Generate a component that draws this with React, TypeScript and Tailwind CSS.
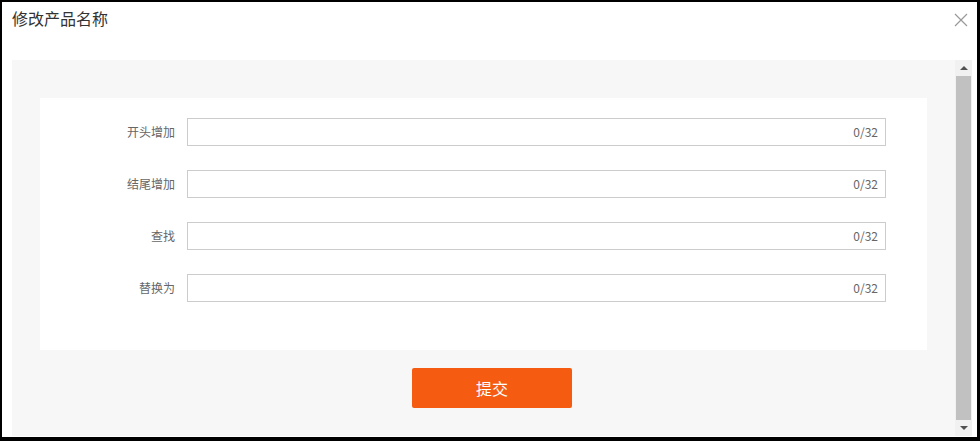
import React from "react";

const rows = ["开头增加", "结尾增加", "查找", "替换为"];

export default function App() {
  return (
    <div
      className="w-[980px] h-[441px] bg-black pt-[2px] pl-[2px] pr-[3px] pb-[4px]"
      style={{ fontFamily: '"Noto Sans CJK SC", "Noto Sans", sans-serif' }}
    >
      <div className="w-full h-full bg-white flex flex-col pl-[10px] pr-[5px]">
        <div className="h-[58px] shrink-0 flex items-start justify-between">
          <div className="text-[16px] leading-[20px] text-[#333] pt-[6px]">修改产品名称</div>
          <svg width="14" height="14" viewBox="0 0 14 14" className="mt-[11px] mr-[4px]">
            <path d="M1 1L13 13M13 1L1 13" stroke="#999" strokeWidth="1.2" fill="none" />
          </svg>
        </div>
        <div className="flex-1 flex min-h-0 pb-[1px]">
          <div className="flex-1 bg-[#f7f7f7] pt-[38px] px-[28px]">
            <div className="bg-white h-[252px] pt-[20px] flex flex-col gap-[24px]">
              {rows.map((r) => (
                <div key={r} className="flex items-center h-[28px]">
                  <div className="w-[135px] text-right text-[12px] text-[#666] pr-0">{r}</div>
                  <div className="ml-[12px] w-[699px] h-[28px] border border-[#ccc] flex items-center justify-end pr-[7px] text-[12px] text-[#666]">
                    0/32
                  </div>
                </div>
              ))}
            </div>
            <div className="pt-[18px] pl-[372px]">
              <button className="w-[160px] h-[40px] bg-[#f55c12] rounded-[2px] text-white text-[16px]">提交</button>
            </div>
          </div>
          <div className="w-[17px] bg-[#f1f1f1] flex flex-col">
            <div className="h-[16px] flex items-center justify-center">
              <svg width="8" height="4" viewBox="0 0 8 4"><path d="M0 4L4 0L8 4Z" fill="#505050" /></svg>
            </div>
            <div className="flex-1 mx-[1px] bg-[#c1c1c1]" />
            <div className="h-[16px] flex items-center justify-center">
              <svg width="8" height="4" viewBox="0 0 8 4"><path d="M0 0L4 4L8 0Z" fill="#505050" /></svg>
            </div>
          </div>
        </div>
      </div>
    </div>
  );
}
